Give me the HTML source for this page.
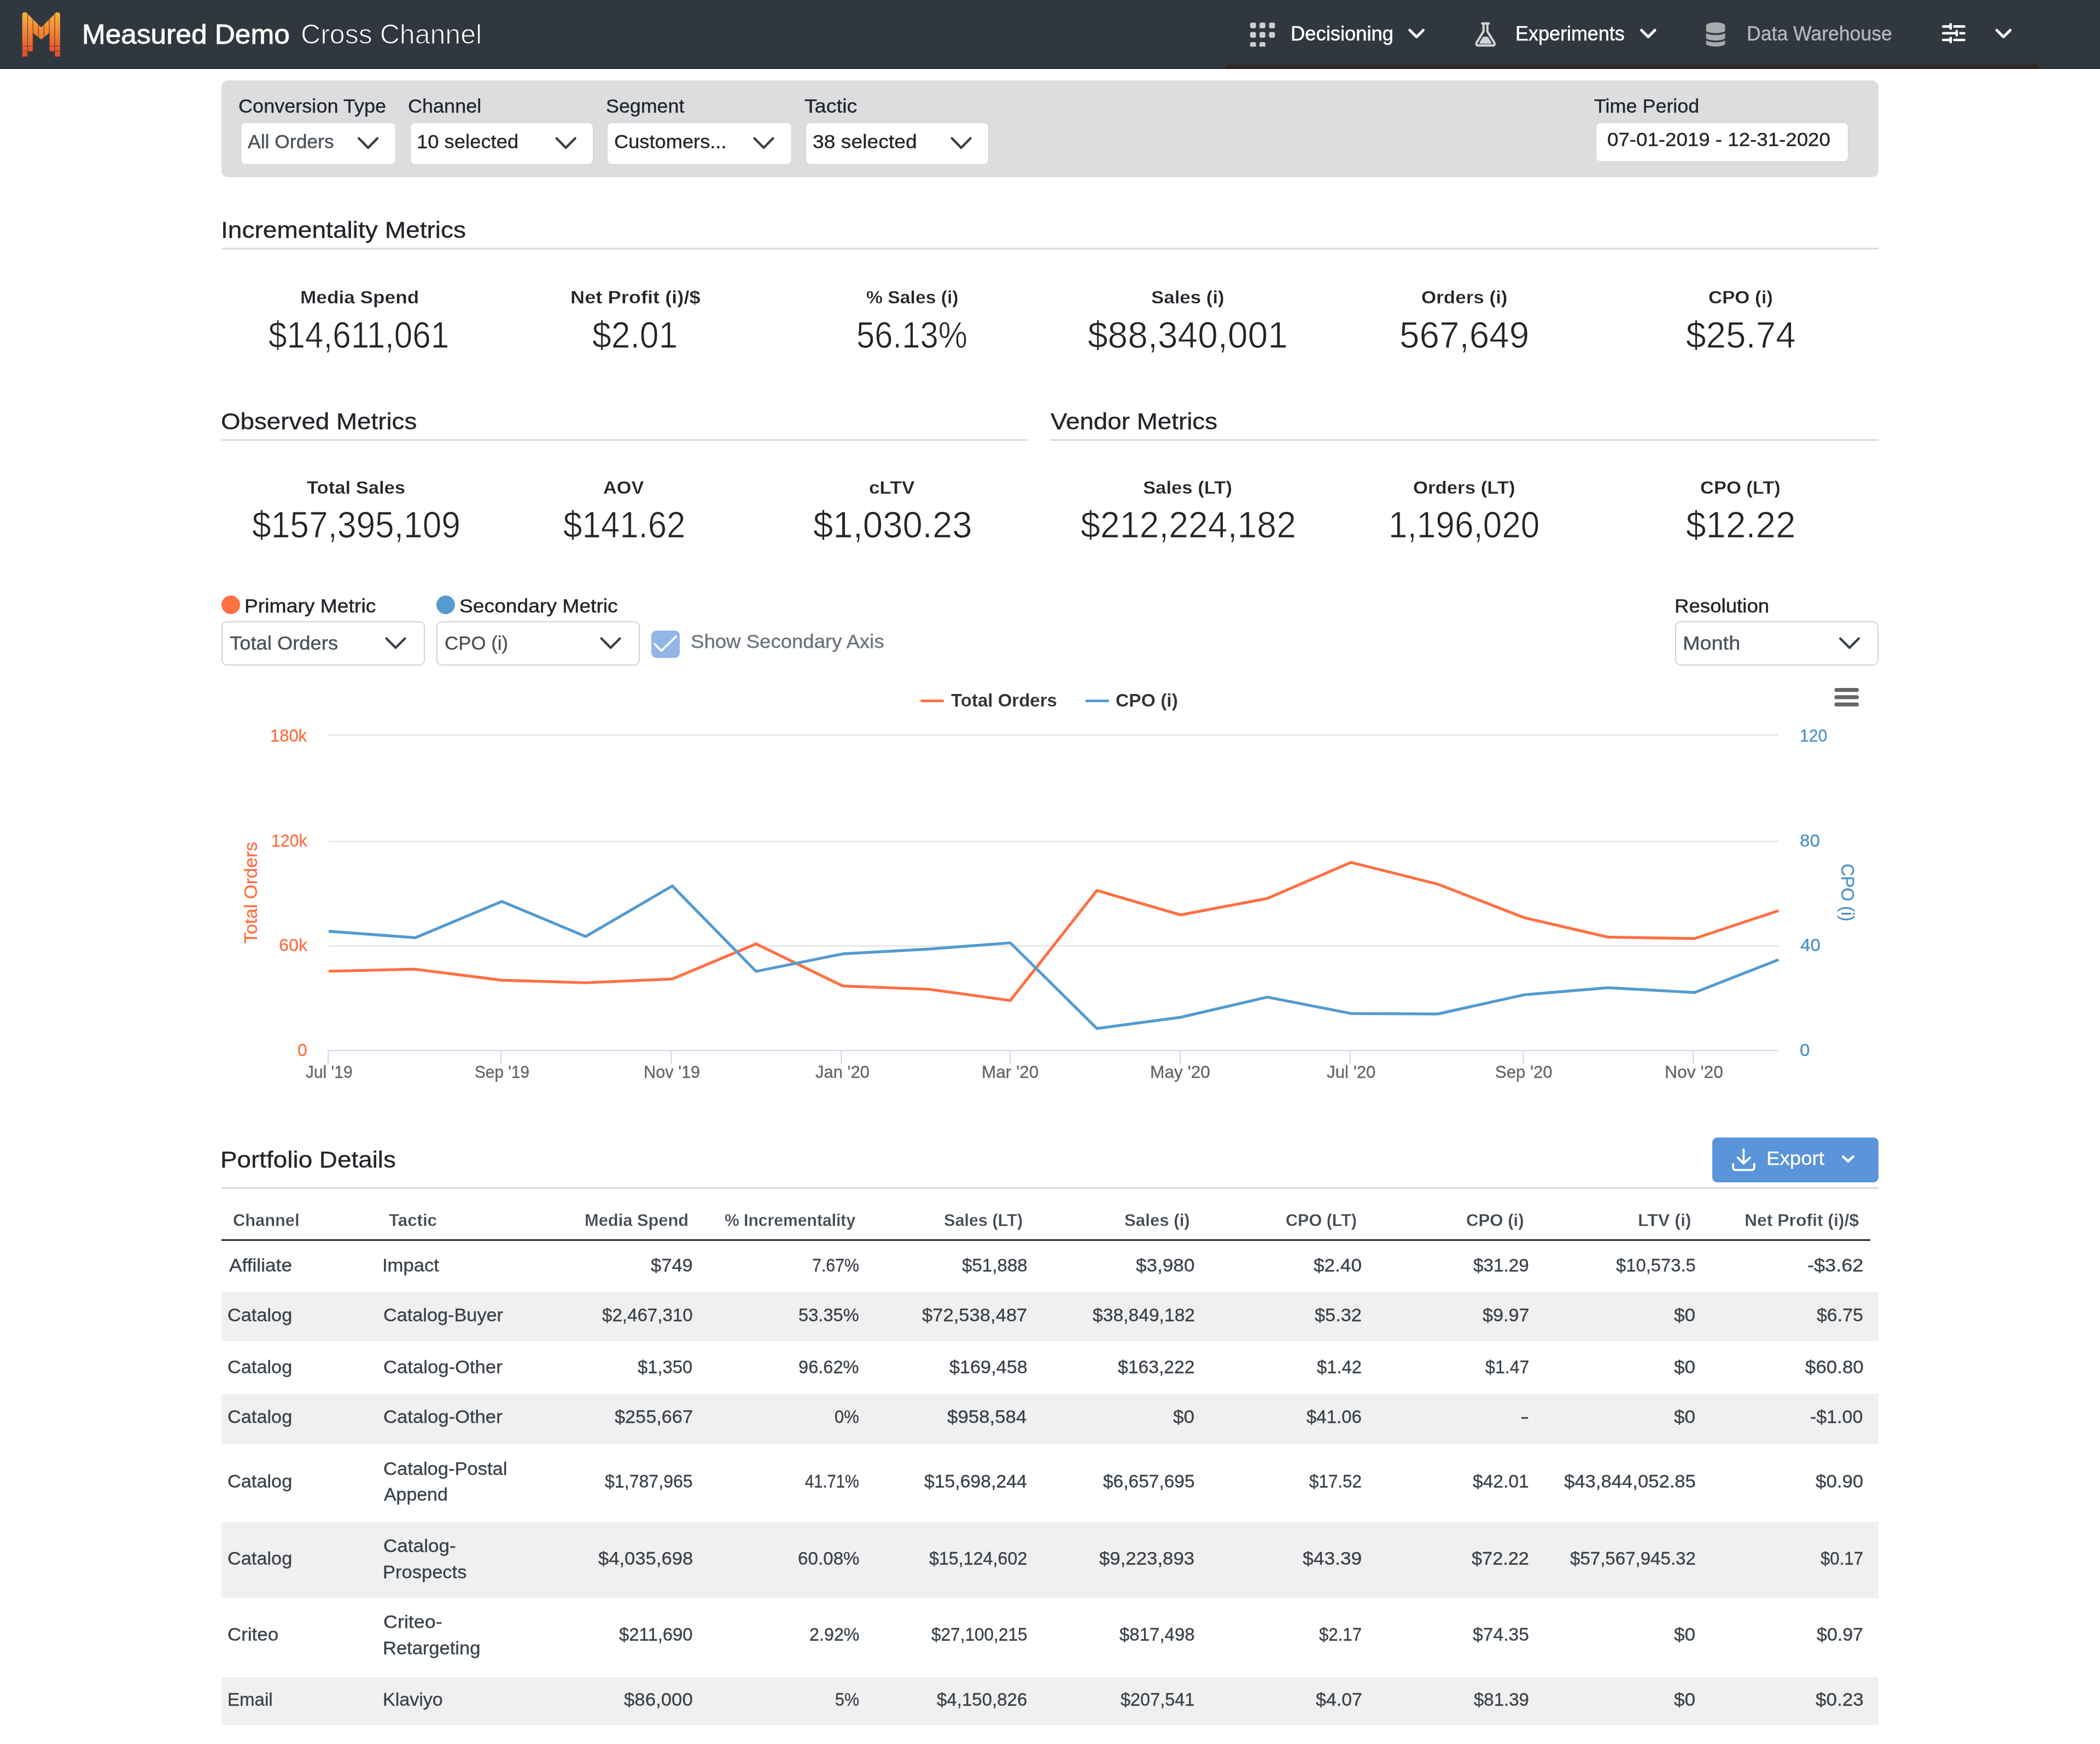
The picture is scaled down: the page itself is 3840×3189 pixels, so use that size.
<!DOCTYPE html>
<html><head><meta charset="utf-8"><title>Measured Demo - Cross Channel</title>
<style>
html,body{margin:0;padding:0;background:#fff;}
body{width:3840px;height:3189px;position:relative;overflow:hidden;font-family:"Liberation Sans",sans-serif;}
.a{position:absolute;}
.t{position:absolute;white-space:nowrap;line-height:1;transform-origin:0 50%;}
.hdr{left:0;top:0;width:3840px;height:125.5px;background:#30373f;}
.fbar{left:405px;top:147px;width:3030px;height:177px;background:#dcdddf;border-radius:12px;}
.sel{background:#fff;border:1.5px solid #cdd2d8;border-radius:9px;box-sizing:border-box;}
.sel2{background:#fff;border:2.5px solid #ced4da;border-radius:10px;box-sizing:border-box;}
.rule{height:2.8px;background:#dadbdd;}
.stripe{left:405px;width:3030px;background:#f0f0f0;}
svg{position:absolute;overflow:visible;}
</style></head><body>
<!-- header -->
<div class="a hdr"></div>
<div class="a" style="left:2242px;top:118.3px;width:1486px;height:7px;background:#2f2926"></div>
<div class="a" style="left:0;top:124.8px;width:3840px;height:1.2px;background:#050607"></div>
<!--LOGO-->
<!--NAVICONS-->
<!-- filter bar -->
<div class="a fbar"></div>
<div class="a sel" style="left:440px;top:224px;width:284px;height:77px"></div>
<div class="a sel" style="left:750px;top:224px;width:334.5px;height:77px"></div>
<div class="a sel" style="left:1110px;top:224px;width:337.5px;height:77px"></div>
<div class="a sel" style="left:1473px;top:224px;width:335px;height:77px"></div>
<div class="a sel" style="left:2918px;top:224px;width:461.5px;height:71.5px"></div>
<!-- section rules -->
<div class="a rule" style="left:405px;top:453.2px;width:3030px"></div>
<div class="a rule" style="left:405px;top:803px;width:1474px"></div>
<div class="a rule" style="left:1920px;top:803px;width:1515px"></div>
<div class="a rule" style="left:405px;top:2171.3px;width:3030px"></div>
<!-- chart controls -->
<div class="a" style="left:404.5px;top:1089px;width:34px;height:34px;border-radius:50%;background:#ff7043"></div>
<div class="a" style="left:797.5px;top:1089px;width:34px;height:34px;border-radius:50%;background:#549bd0"></div>
<div class="a sel2" style="left:405px;top:1135.5px;width:372px;height:81.5px"></div>
<div class="a sel2" style="left:797.5px;top:1135.5px;width:372px;height:81.5px"></div>
<div class="a sel2" style="left:3063px;top:1135.5px;width:372px;height:81.5px"></div>
<div class="a" style="left:1190.5px;top:1153px;width:52.5px;height:50px;border-radius:9px;background:#92b6e6"></div>
<!--CHEVRONS-->
<!-- export -->
<div class="a" style="left:3131px;top:2080px;width:304px;height:82px;border-radius:9px;background:#5a94d9"></div>
<!--EXPORTICON-->
<!-- table -->
<div class="a" style="left:405px;top:2266px;width:3015.2px;height:2.8px;background:#272d35"></div>
<div class="a stripe" style="top:2363.3px;height:88.3px"></div>
<div class="a stripe" style="top:2549.3px;height:91.4px"></div>
<div class="a stripe" style="top:2783.3px;height:138.4px"></div>
<div class="a stripe" style="top:3066.7px;height:87.6px"></div>
<svg width="3840" height="3189" viewBox="0 0 3840 3189" style="left:0;top:0">
<defs><linearGradient id="lg" x1="0" y1="22" x2="0" y2="104" gradientUnits="userSpaceOnUse"><stop offset="0" stop-color="#f9b340"/><stop offset="0.45" stop-color="#ee8438"/><stop offset="1" stop-color="#df4a2f"/></linearGradient></defs>
<path fill="url(#lg)" d="M40.6,103.6 L40.6,27.2 Q40.6,22.4 45.35,22.4 Q49.6,22.4 50.6,25.6 L75.25,50 L99.9,25.6 Q100.9,22.4 105.15,22.4 Q109.9,22.4 109.9,27.2 L109.9,103.6 L100.1,103.6 L100.1,93.7 L90.3,93.7 L90.3,60.2 L75.25,72.2 L60.2,60.2 L60.2,93.7 L50.5,93.7 L50.5,103.6 Z"/>
<path stroke="#5b2a1c" stroke-opacity="0.85" stroke-width="1.1" fill="none" d="M50.5,24.5V103.6 M60.4,35V93.7 M70.4,45V68.4 M80.4,45V68 M90.1,35V93.7 M100,24.5V103.6 M40.6,84.2H60.4 M90.1,84.2H109.9 M40.6,93.7H50.5 M100,93.7H109.9"/>
<rect x="2285.9" y="41.3" width="10.7" height="10.5" rx="3" fill="#cfcfcf"/>
<rect x="2303.1" y="41.3" width="10.7" height="10.5" rx="3" fill="#cfcfcf"/>
<rect x="2320.6" y="41.3" width="10.7" height="10.5" rx="3" fill="#cfcfcf"/>
<rect x="2285.9" y="58.5" width="10.7" height="10.5" rx="3" fill="#cfcfcf"/>
<rect x="2303.1" y="58.5" width="10.7" height="10.5" rx="3" fill="#cfcfcf"/>
<rect x="2320.6" y="58.5" width="10.7" height="10.5" rx="3" fill="#cfcfcf"/>
<path fill="#cfcfcf" d="M2285.9,85.3 v-5.3 q0,-3 3,-3 h4.7 q3,0 3,3 v5.3 z"/>
<path fill="#cfcfcf" d="M2303.1,85.3 v-5.3 q0,-3 3,-3 h4.7 q3,0 3,3 v5.3 z"/>
<polyline points="2577.9,55.2 2590.2,67.4 2602.5,55.2" fill="none" stroke="#fff" stroke-width="5" stroke-linecap="round" stroke-linejoin="round"/>
<polyline points="3001.5,55.2 3013.8,67.4 3026.1,55.2" fill="none" stroke="#fff" stroke-width="5" stroke-linecap="round" stroke-linejoin="round"/>
<polyline points="3651.2,55.2 3663.5,67.4 3675.8,55.2" fill="none" stroke="#fff" stroke-width="5" stroke-linecap="round" stroke-linejoin="round"/>
<path fill="none" stroke="#d2d2d2" stroke-width="4.2" stroke-linecap="round" stroke-linejoin="round" d="M2710.2,42.9 H2722.3 M2712.7,44 V57.6 L2700.4,77.4 Q2697.6,83.2 2703.6,83.2 H2728.9 Q2734.9,83.2 2732.1,77.4 L2719.8,57.6 V44"/>
<path fill="#d2d2d2" d="M2705.7,77.4 L2710.7,69 Q2711.9,67 2714.1,67 H2718.4 Q2720.6,67 2721.8,69 L2726.8,77.4 Q2727.9,79.9 2725.4,79.9 H2707.1 Q2704.6,79.9 2705.7,77.4 Z"/>
<path fill="#a9aaac" d="M3119.7,47 A17.4,6.2 0 0 1 3154.5,47 V79.5 A17.4,5.8 0 0 1 3119.7,79.5 Z"/>
<path fill="none" stroke="#30373f" stroke-width="3.2" d="M3119.2,57.2 A17.9,5.2 0 0 0 3155,57.2 M3119.2,70.6 A17.9,5.2 0 0 0 3155,70.6"/>
<path stroke="#fff" stroke-width="4.6" stroke-linecap="round" fill="none" d="M3553.2,48.4H3566.9 M3566.9,44.4V52.2 M3573.6,48.4H3591.7 M3553.2,60.7H3578 M3578,56.8V64.5 M3584.7,60.7H3591.7 M3553.2,73H3566.9 M3566.9,69.2V77 M3573.6,73H3591.7"/>
<polyline points="656.2,252.9 673.1,270.3 690.0,252.9" fill="none" stroke="#3a4047" stroke-width="4.3" stroke-linecap="round" stroke-linejoin="round"/>
<polyline points="1017.8,252.9 1034.7,270.3 1051.6,252.9" fill="none" stroke="#3a4047" stroke-width="4.3" stroke-linecap="round" stroke-linejoin="round"/>
<polyline points="1379.6,252.9 1396.5,270.3 1413.4,252.9" fill="none" stroke="#3a4047" stroke-width="4.3" stroke-linecap="round" stroke-linejoin="round"/>
<polyline points="1740.7,252.9 1757.6,270.3 1774.5,252.9" fill="none" stroke="#3a4047" stroke-width="4.3" stroke-linecap="round" stroke-linejoin="round"/>
<polyline points="706.6,1167.5 723.5,1184.5 740.4,1167.5" fill="none" stroke="#3a4047" stroke-width="4.3" stroke-linecap="round" stroke-linejoin="round"/>
<polyline points="1099.7,1167.5 1116.6,1184.5 1133.5,1167.5" fill="none" stroke="#3a4047" stroke-width="4.3" stroke-linecap="round" stroke-linejoin="round"/>
<polyline points="3365.1,1167.5 3382.0,1184.5 3398.9,1167.5" fill="none" stroke="#3a4047" stroke-width="4.3" stroke-linecap="round" stroke-linejoin="round"/>
<polyline points="1196.7,1177.3 1209.3,1189.9 1236.3,1163.6" fill="none" stroke="#fff" stroke-width="3.6" stroke-linecap="round" stroke-linejoin="round"/>
<path stroke="#666" stroke-width="7.3" stroke-linecap="round" d="M3358,1261.6H3395.3 M3358,1274.9H3395.3 M3358,1288.2H3395.3"/>
<path fill="none" stroke="#fff" stroke-width="3.8" stroke-linecap="round" stroke-linejoin="round" d="M3188.3,2101.8V2127 M3177.5,2116.7L3188.3,2127.5L3199.8,2116.7 M3169.1,2128.5V2134.5Q3169.1,2139.4 3174,2139.4H3203Q3207.8,2139.4 3207.8,2134.5V2128.5"/>
<polyline points="3370.2,2114.8 3379.4,2123.7 3388.6,2114.8" fill="none" stroke="#fff" stroke-width="4.5" stroke-linecap="round" stroke-linejoin="round"/>
<path stroke="#e5e5e5" stroke-width="2.4" d="M601,1344.3H3252 M601,1538.4H3252 M601,1729.7H3252"/>
<path stroke="#ccd6eb" stroke-width="2" d="M599,1921H3252"/>
<path stroke="#ccd6eb" stroke-width="2" d="M600.1,1921V1946 M916.2,1921V1946 M1227.4,1921V1946 M1538.3,1921V1946 M1846.9,1921V1946 M2158.1,1921V1946 M2468.6,1921V1946 M2785.4,1921V1946 M3096.3,1921V1946"/>
<polyline fill="none" stroke="#ff7043" stroke-width="5.2" stroke-linejoin="round" points="601.0,1776.0 759.3,1772.2 917.7,1792.4 1070.9,1797.0 1229.3,1790.2 1382.5,1725.9 1540.9,1802.9 1699.2,1809.0 1847.4,1829.5 2005.7,1628.3 2158.9,1672.9 2317.3,1642.9 2470.5,1576.9 2628.9,1616.7 2787.2,1678.0 2940.5,1713.6 3098.8,1716.1 3252.1,1665.3"/>
<polyline fill="none" stroke="#549bd0" stroke-width="5.2" stroke-linejoin="round" points="601.0,1702.9 759.3,1714.7 917.7,1648.4 1070.9,1712.4 1229.3,1619.9 1382.5,1776.2 1540.9,1744.2 1699.2,1735.4 1847.4,1724.0 2005.7,1880.7 2158.9,1860.1 2317.3,1823.3 2470.5,1853.3 2628.9,1854.1 2787.2,1819.0 2940.5,1806.1 3098.8,1814.8 3252.1,1754.9"/>
<path stroke="#ff7043" stroke-width="4.6" d="M1683.4,1281.6H1725.7"/>
<path stroke="#549bd0" stroke-width="4.6" d="M1985,1281.6H2027.7"/>
<text x="0.0" y="0.0" font-family="Liberation Sans, sans-serif" font-size="33.82" fill="#ff7043" stroke="#ff7043" stroke-width="0.35" text-anchor="middle" textLength="186.0" lengthAdjust="spacingAndGlyphs" transform="translate(469.8,1632.5) rotate(-90)">Total Orders</text>
<text x="0.0" y="0.0" font-family="Liberation Sans, sans-serif" font-size="33.82" fill="#4c92c8" stroke="#4c92c8" stroke-width="0.35" text-anchor="middle" textLength="105.5" lengthAdjust="spacingAndGlyphs" transform="translate(3366.9,1632) rotate(90)">CPO (i)</text>
</svg>
<div id="txt" style="position:absolute;left:0;top:0;width:3840px;height:3189px;will-change:transform">
<span class="t" style="left:149.62px;top:37.7px;font-size:50.74px;color:#fff;transform:scaleX(1.0126);-webkit-text-stroke:0.9px #fff">Measured Demo</span>
<span class="t" style="left:550.18px;top:37.7px;font-size:50.74px;color:#fff;transform:scaleX(0.9868);-webkit-text-stroke:1.2px #30373f">Cross Channel</span>
<span class="t" style="left:2359.81px;top:44.1px;font-size:36.15px;color:#fff;transform:scaleX(1.0063);-webkit-text-stroke:0.5px #fff">Decisioning</span>
<span class="t" style="left:2770.84px;top:44.1px;font-size:36.15px;color:#fff;transform:scaleX(0.9948);-webkit-text-stroke:0.5px #fff">Experiments</span>
<span class="t" style="left:3194.47px;top:44.1px;font-size:36.15px;color:#b3b8bd;transform:scaleX(0.9850);-webkit-text-stroke:0.4px #b3b8bd">Data Warehouse</span>
<span class="t" style="left:436.04px;top:176.5px;font-size:34.88px;color:#212529;transform:scaleX(1.0347);-webkit-text-stroke:0.35px #212529">Conversion Type</span>
<span class="t" style="left:746.23px;top:176.5px;font-size:34.88px;color:#212529;transform:scaleX(1.0335);-webkit-text-stroke:0.35px #212529">Channel</span>
<span class="t" style="left:1107.87px;top:176.5px;font-size:34.88px;color:#212529;transform:scaleX(1.0268);-webkit-text-stroke:0.35px #212529">Segment</span>
<span class="t" style="left:1470.69px;top:176.5px;font-size:34.88px;color:#212529;transform:scaleX(1.0822);-webkit-text-stroke:0.35px #212529">Tactic</span>
<span class="t" style="left:2914.91px;top:176.5px;font-size:34.88px;color:#212529;transform:scaleX(1.0300);-webkit-text-stroke:0.35px #212529">Time Period</span>
<span class="t" style="left:452.99px;top:241.7px;font-size:34.88px;color:#495057;transform:scaleX(1.0166);-webkit-text-stroke:0.35px #495057">All Orders</span>
<span class="t" style="left:761.84px;top:241.7px;font-size:34.88px;color:#212529;transform:scaleX(1.0439);-webkit-text-stroke:0.35px #212529">10 selected</span>
<span class="t" style="left:1123.41px;top:241.7px;font-size:34.88px;color:#212529;transform:scaleX(1.0397);-webkit-text-stroke:0.35px #212529">Customers...</span>
<span class="t" style="left:1486.47px;top:241.7px;font-size:34.88px;color:#212529;transform:scaleX(1.0693);-webkit-text-stroke:0.35px #212529">38 selected</span>
<span class="t" style="left:2938.92px;top:238.2px;font-size:34.88px;color:#212529;transform:scaleX(1.0518);-webkit-text-stroke:0.35px #212529">07-01-2019 - 12-31-2020</span>
<span class="t" style="left:403.65px;top:398.5px;font-size:43.13px;color:#212529;transform:scaleX(1.0685);-webkit-text-stroke:0.35px #212529">Incrementality Metrics</span>
<span class="t" style="left:404.16px;top:748.8px;font-size:43.13px;color:#212529;transform:scaleX(1.0604);-webkit-text-stroke:0.35px #212529">Observed Metrics</span>
<span class="t" style="left:1920.74px;top:748.8px;font-size:43.13px;color:#212529;transform:scaleX(1.0606);-webkit-text-stroke:0.35px #212529">Vendor Metrics</span>
<span class="t" style="left:402.75px;top:2099.4px;font-size:43.13px;color:#212529;transform:scaleX(1.0628);-webkit-text-stroke:0.35px #212529">Portfolio Details</span>
<span class="t" style="left:548.66px;top:527.3px;font-size:33.82px;color:#212529;transform:scaleX(1.0417);font-weight:700;-webkit-text-stroke:0.3px #fff">Media Spend</span>
<span class="t" style="left:490.94px;top:578.9px;font-size:67.65px;color:#212529;transform:scaleX(0.8899);-webkit-text-stroke:0.9px #fff">$14,611,061</span>
<span class="t" style="left:1042.72px;top:527.3px;font-size:33.82px;color:#212529;transform:scaleX(1.0720);font-weight:700;-webkit-text-stroke:0.3px #fff">Net Profit (i)/$</span>
<span class="t" style="left:1083.38px;top:578.9px;font-size:67.65px;color:#212529;transform:scaleX(0.9230);-webkit-text-stroke:0.9px #fff">$2.01</span>
<span class="t" style="left:1583.57px;top:527.3px;font-size:33.82px;color:#212529;transform:scaleX(0.9967);font-weight:700;-webkit-text-stroke:0.3px #fff">% Sales (i)</span>
<span class="t" style="left:1565.71px;top:578.9px;font-size:67.65px;color:#212529;transform:scaleX(0.8850);-webkit-text-stroke:0.9px #fff">56.13%</span>
<span class="t" style="left:2105.10px;top:527.3px;font-size:33.82px;color:#212529;transform:scaleX(1.0313);font-weight:700;-webkit-text-stroke:0.3px #fff">Sales (i)</span>
<span class="t" style="left:1988.98px;top:578.9px;font-size:67.65px;color:#212529;transform:scaleX(0.9725);-webkit-text-stroke:0.9px #fff">$88,340,001</span>
<span class="t" style="left:2598.63px;top:527.3px;font-size:33.82px;color:#212529;transform:scaleX(1.0350);font-weight:700;-webkit-text-stroke:0.3px #fff">Orders (i)</span>
<span class="t" style="left:2559.33px;top:578.9px;font-size:67.65px;color:#212529;transform:scaleX(0.9708);-webkit-text-stroke:0.9px #fff">567,649</span>
<span class="t" style="left:3123.63px;top:527.3px;font-size:33.82px;color:#212529;transform:scaleX(1.0294);font-weight:700;-webkit-text-stroke:0.3px #fff">CPO (i)</span>
<span class="t" style="left:3083.17px;top:578.9px;font-size:67.65px;color:#212529;transform:scaleX(0.9700);-webkit-text-stroke:0.9px #fff">$25.74</span>
<span class="t" style="left:560.94px;top:874.5px;font-size:33.82px;color:#212529;transform:scaleX(1.0227);font-weight:700;-webkit-text-stroke:0.3px #fff">Total Sales</span>
<span class="t" style="left:460.57px;top:925.9px;font-size:67.65px;color:#212529;transform:scaleX(0.9206);-webkit-text-stroke:0.9px #fff">$157,395,109</span>
<span class="t" style="left:1103.20px;top:874.5px;font-size:33.82px;color:#212529;transform:scaleX(1.0134);font-weight:700;-webkit-text-stroke:0.3px #fff">AOV</span>
<span class="t" style="left:1030.41px;top:925.9px;font-size:67.65px;color:#212529;transform:scaleX(0.9138);-webkit-text-stroke:0.9px #fff">$141.62</span>
<span class="t" style="left:1589.42px;top:874.5px;font-size:33.82px;color:#212529;transform:scaleX(1.0414);font-weight:700;-webkit-text-stroke:0.3px #fff">cLTV</span>
<span class="t" style="left:1486.98px;top:925.9px;font-size:67.65px;color:#212529;transform:scaleX(0.9658);-webkit-text-stroke:0.9px #fff">$1,030.23</span>
<span class="t" style="left:2090.15px;top:874.5px;font-size:33.82px;color:#212529;transform:scaleX(1.0247);font-weight:700;-webkit-text-stroke:0.3px #fff">Sales (LT)</span>
<span class="t" style="left:1975.58px;top:925.9px;font-size:67.65px;color:#212529;transform:scaleX(0.9522);-webkit-text-stroke:0.9px #fff">$212,224,182</span>
<span class="t" style="left:2583.84px;top:874.5px;font-size:33.82px;color:#212529;transform:scaleX(1.0279);font-weight:700;-webkit-text-stroke:0.3px #fff">Orders (LT)</span>
<span class="t" style="left:2539.02px;top:925.9px;font-size:67.65px;color:#212529;transform:scaleX(0.9183);-webkit-text-stroke:0.9px #fff">1,196,020</span>
<span class="t" style="left:3108.86px;top:874.5px;font-size:33.82px;color:#212529;transform:scaleX(1.0199);font-weight:700;-webkit-text-stroke:0.3px #fff">CPO (LT)</span>
<span class="t" style="left:3082.77px;top:925.9px;font-size:67.65px;color:#212529;transform:scaleX(0.9691);-webkit-text-stroke:0.9px #fff">$12.22</span>
<span class="t" style="left:446.67px;top:1090.1px;font-size:35.94px;color:#212529;transform:scaleX(1.0381);-webkit-text-stroke:0.5px #212529">Primary Metric</span>
<span class="t" style="left:839.68px;top:1090.1px;font-size:35.94px;color:#212529;transform:scaleX(1.0366);-webkit-text-stroke:0.5px #212529">Secondary Metric</span>
<span class="t" style="left:3061.77px;top:1090.1px;font-size:35.94px;color:#212529;transform:scaleX(1.0205);-webkit-text-stroke:0.5px #212529">Resolution</span>
<span class="t" style="left:420.30px;top:1158.7px;font-size:34.88px;color:#495057;transform:scaleX(1.0429);-webkit-text-stroke:0.35px #495057">Total Orders</span>
<span class="t" style="left:813.09px;top:1158.7px;font-size:34.88px;color:#495057;transform:scaleX(0.9989);-webkit-text-stroke:0.35px #495057">CPO (i)</span>
<span class="t" style="left:3077.48px;top:1158.7px;font-size:34.88px;color:#495057;transform:scaleX(1.0852);-webkit-text-stroke:0.35px #495057">Month</span>
<span class="t" style="left:1262.65px;top:1155.6px;font-size:34.88px;color:#6c757d;transform:scaleX(1.0488);-webkit-text-stroke:0.4px #6c757d">Show Secondary Axis</span>
<span class="t" style="left:3229.87px;top:2100.5px;font-size:35.41px;color:#fff;transform:scaleX(1.0361);-webkit-text-stroke:0.35px #fff">Export</span>
<span class="t" style="left:425.71px;top:2215.7px;font-size:31.29px;color:#434a54;transform:scaleX(0.9852);font-weight:700;-webkit-text-stroke:0.3px #fff">Channel</span>
<span class="t" style="left:710.72px;top:2215.7px;font-size:31.29px;color:#434a54;transform:scaleX(0.9991);font-weight:700;-webkit-text-stroke:0.3px #fff">Tactic</span>
<span class="t" style="left:1068.59px;top:2215.7px;font-size:31.29px;color:#434a54;transform:scaleX(0.9857);font-weight:700;-webkit-text-stroke:0.3px #fff">Media Spend</span>
<span class="t" style="left:1324.75px;top:2215.7px;font-size:31.29px;color:#434a54;transform:scaleX(0.9619);font-weight:700;-webkit-text-stroke:0.3px #fff">% Incrementality</span>
<span class="t" style="left:1725.63px;top:2215.7px;font-size:31.29px;color:#434a54;transform:scaleX(0.9792);font-weight:700;-webkit-text-stroke:0.3px #fff">Sales (LT)</span>
<span class="t" style="left:2056.14px;top:2215.7px;font-size:31.29px;color:#434a54;transform:scaleX(0.9984);font-weight:700;-webkit-text-stroke:0.3px #fff">Sales (i)</span>
<span class="t" style="left:2351.12px;top:2215.7px;font-size:31.29px;color:#434a54;transform:scaleX(0.9761);font-weight:700;-webkit-text-stroke:0.3px #fff">CPO (LT)</span>
<span class="t" style="left:2681.35px;top:2215.7px;font-size:31.29px;color:#434a54;transform:scaleX(0.9965);font-weight:700;-webkit-text-stroke:0.3px #fff">CPO (i)</span>
<span class="t" style="left:2995.30px;top:2215.7px;font-size:31.29px;color:#434a54;transform:scaleX(1.0271);font-weight:700;-webkit-text-stroke:0.3px #fff">LTV (i)</span>
<span class="t" style="left:3189.72px;top:2215.7px;font-size:31.29px;color:#434a54;transform:scaleX(1.0194);font-weight:700;-webkit-text-stroke:0.3px #fff">Net Profit (i)/$</span>
<span class="t" style="left:418.59px;top:2296.6px;font-size:33.82px;color:#3a4149;transform:scaleX(1.0432);-webkit-text-stroke:0.35px #3a4149">Affiliate</span>
<span class="t" style="left:699.24px;top:2296.6px;font-size:33.82px;color:#3a4149;transform:scaleX(1.0244);-webkit-text-stroke:0.35px #3a4149">Impact</span>
<span class="t" style="left:1190.42px;top:2296.6px;font-size:33.82px;color:#3a4149;transform:scaleX(1.0204);-webkit-text-stroke:0.35px #3a4149">$749</span>
<span class="t" style="left:1485.09px;top:2296.6px;font-size:33.82px;color:#3a4149;transform:scaleX(0.8976);-webkit-text-stroke:0.35px #3a4149">7.67%</span>
<span class="t" style="left:1759.05px;top:2296.6px;font-size:33.82px;color:#3a4149;transform:scaleX(0.9795);-webkit-text-stroke:0.35px #3a4149">$51,888</span>
<span class="t" style="left:2076.82px;top:2296.6px;font-size:33.82px;color:#3a4149;transform:scaleX(1.0389);-webkit-text-stroke:0.35px #3a4149">$3,980</span>
<span class="t" style="left:2401.82px;top:2296.6px;font-size:33.82px;color:#3a4149;transform:scaleX(1.0393);-webkit-text-stroke:0.35px #3a4149">$2.40</span>
<span class="t" style="left:2694.26px;top:2296.6px;font-size:33.82px;color:#3a4149;transform:scaleX(0.9832);-webkit-text-stroke:0.35px #3a4149">$31.29</span>
<span class="t" style="left:2955.06px;top:2296.6px;font-size:33.82px;color:#3a4149;transform:scaleX(0.9690);-webkit-text-stroke:0.35px #3a4149">$10,573.5</span>
<span class="t" style="left:3305.28px;top:2296.6px;font-size:33.82px;color:#3a4149;transform:scaleX(1.0669);-webkit-text-stroke:0.35px #3a4149">-$3.62</span>
<span class="t" style="left:416.10px;top:2388.3px;font-size:33.82px;color:#3a4149;transform:scaleX(1.0150);-webkit-text-stroke:0.35px #3a4149">Catalog</span>
<span class="t" style="left:700.70px;top:2388.3px;font-size:33.82px;color:#3a4149;transform:scaleX(1.0133);-webkit-text-stroke:0.35px #3a4149">Catalog-Buyer</span>
<span class="t" style="left:1101.05px;top:2388.3px;font-size:33.82px;color:#3a4149;transform:scaleX(0.9784);-webkit-text-stroke:0.35px #3a4149">$2,467,310</span>
<span class="t" style="left:1460.21px;top:2388.3px;font-size:33.82px;color:#3a4149;transform:scaleX(0.9654);-webkit-text-stroke:0.35px #3a4149">53.35%</span>
<span class="t" style="left:1686.42px;top:2388.3px;font-size:33.82px;color:#3a4149;transform:scaleX(1.0230);-webkit-text-stroke:0.35px #3a4149">$72,538,487</span>
<span class="t" style="left:1997.64px;top:2388.3px;font-size:33.82px;color:#3a4149;transform:scaleX(0.9948);-webkit-text-stroke:0.35px #3a4149">$38,849,182</span>
<span class="t" style="left:2404.22px;top:2388.3px;font-size:33.82px;color:#3a4149;transform:scaleX(1.0161);-webkit-text-stroke:0.35px #3a4149">$5.32</span>
<span class="t" style="left:2710.82px;top:2388.3px;font-size:33.82px;color:#3a4149;transform:scaleX(1.0108);-webkit-text-stroke:0.35px #3a4149">$9.97</span>
<span class="t" style="left:3061.21px;top:2388.3px;font-size:33.82px;color:#3a4149;transform:scaleX(1.0423);-webkit-text-stroke:0.35px #3a4149">$0</span>
<span class="t" style="left:3322.25px;top:2388.3px;font-size:33.82px;color:#3a4149;transform:scaleX(1.0018);-webkit-text-stroke:0.35px #3a4149">$6.75</span>
<span class="t" style="left:416.10px;top:2482.6px;font-size:33.82px;color:#3a4149;transform:scaleX(1.0150);-webkit-text-stroke:0.35px #3a4149">Catalog</span>
<span class="t" style="left:700.68px;top:2482.6px;font-size:33.82px;color:#3a4149;transform:scaleX(1.0250);-webkit-text-stroke:0.35px #3a4149">Catalog-Other</span>
<span class="t" style="left:1166.26px;top:2482.6px;font-size:33.82px;color:#3a4149;transform:scaleX(0.9702);-webkit-text-stroke:0.35px #3a4149">$1,350</span>
<span class="t" style="left:1460.37px;top:2482.6px;font-size:33.82px;color:#3a4149;transform:scaleX(0.9643);-webkit-text-stroke:0.35px #3a4149">96.62%</span>
<span class="t" style="left:1735.83px;top:2482.6px;font-size:33.82px;color:#3a4149;transform:scaleX(1.0122);-webkit-text-stroke:0.35px #3a4149">$169,458</span>
<span class="t" style="left:2044.24px;top:2482.6px;font-size:33.82px;color:#3a4149;transform:scaleX(0.9967);-webkit-text-stroke:0.35px #3a4149">$163,222</span>
<span class="t" style="left:2408.45px;top:2482.6px;font-size:33.82px;color:#3a4149;transform:scaleX(0.9693);-webkit-text-stroke:0.35px #3a4149">$1.42</span>
<span class="t" style="left:2715.85px;top:2482.6px;font-size:33.82px;color:#3a4149;transform:scaleX(0.9511);-webkit-text-stroke:0.35px #3a4149">$1.47</span>
<span class="t" style="left:3061.21px;top:2482.6px;font-size:33.82px;color:#3a4149;transform:scaleX(1.0423);-webkit-text-stroke:0.35px #3a4149">$0</span>
<span class="t" style="left:3300.82px;top:2482.6px;font-size:33.82px;color:#3a4149;transform:scaleX(1.0320);-webkit-text-stroke:0.35px #3a4149">$60.80</span>
<span class="t" style="left:416.10px;top:2574.3px;font-size:33.82px;color:#3a4149;transform:scaleX(1.0150);-webkit-text-stroke:0.35px #3a4149">Catalog</span>
<span class="t" style="left:700.68px;top:2574.3px;font-size:33.82px;color:#3a4149;transform:scaleX(1.0250);-webkit-text-stroke:0.35px #3a4149">Catalog-Other</span>
<span class="t" style="left:1123.63px;top:2574.3px;font-size:33.82px;color:#3a4149;transform:scaleX(1.0136);-webkit-text-stroke:0.35px #3a4149">$255,667</span>
<span class="t" style="left:1526.03px;top:2574.3px;font-size:33.82px;color:#3a4149;transform:scaleX(0.9205);-webkit-text-stroke:0.35px #3a4149">0%</span>
<span class="t" style="left:1732.42px;top:2574.3px;font-size:33.82px;color:#3a4149;transform:scaleX(1.0309);-webkit-text-stroke:0.35px #3a4149">$958,584</span>
<span class="t" style="left:2144.63px;top:2574.3px;font-size:33.82px;color:#3a4149;transform:scaleX(1.0423);-webkit-text-stroke:0.35px #3a4149">$0</span>
<span class="t" style="left:2389.26px;top:2574.3px;font-size:33.82px;color:#3a4149;transform:scaleX(0.9759);-webkit-text-stroke:0.35px #3a4149">$41.06</span>
<span class="t" style="left:2780.42px;top:2574.3px;font-size:33.82px;color:#3a4149;transform:scaleX(1.4314);-webkit-text-stroke:0.35px #3a4149">-</span>
<span class="t" style="left:3061.21px;top:2574.3px;font-size:33.82px;color:#3a4149;transform:scaleX(1.0423);-webkit-text-stroke:0.35px #3a4149">$0</span>
<span class="t" style="left:3310.36px;top:2574.3px;font-size:33.82px;color:#3a4149;transform:scaleX(1.0052);-webkit-text-stroke:0.35px #3a4149">-$1.00</span>
<span class="t" style="left:416.10px;top:2691.6px;font-size:33.82px;color:#3a4149;transform:scaleX(1.0150);-webkit-text-stroke:0.35px #3a4149">Catalog</span>
<span class="t" style="left:700.69px;top:2668.9px;font-size:33.82px;color:#3a4149;transform:scaleX(1.0211);-webkit-text-stroke:0.35px #3a4149">Catalog-Postal</span>
<span class="t" style="left:702.20px;top:2715.9px;font-size:33.82px;color:#3a4149;transform:scaleX(1.0018);-webkit-text-stroke:0.35px #3a4149">Append</span>
<span class="t" style="left:1106.06px;top:2691.6px;font-size:33.82px;color:#3a4149;transform:scaleX(0.9496);-webkit-text-stroke:0.35px #3a4149">$1,787,965</span>
<span class="t" style="left:1472.16px;top:2691.6px;font-size:33.82px;color:#3a4149;transform:scaleX(0.8616);-webkit-text-stroke:0.35px #3a4149">41.71%</span>
<span class="t" style="left:1690.03px;top:2691.6px;font-size:33.82px;color:#3a4149;transform:scaleX(0.9986);-webkit-text-stroke:0.35px #3a4149">$15,698,244</span>
<span class="t" style="left:2016.86px;top:2691.6px;font-size:33.82px;color:#3a4149;transform:scaleX(0.9904);-webkit-text-stroke:0.35px #3a4149">$6,657,695</span>
<span class="t" style="left:2394.25px;top:2691.6px;font-size:33.82px;color:#3a4149;transform:scaleX(0.9277);-webkit-text-stroke:0.35px #3a4149">$17.52</span>
<span class="t" style="left:2693.43px;top:2691.6px;font-size:33.82px;color:#3a4149;transform:scaleX(0.9935);-webkit-text-stroke:0.35px #3a4149">$42.01</span>
<span class="t" style="left:2860.02px;top:2691.6px;font-size:33.82px;color:#3a4149;transform:scaleX(1.0248);-webkit-text-stroke:0.35px #3a4149">$43,844,052.85</span>
<span class="t" style="left:3320.02px;top:2691.6px;font-size:33.82px;color:#3a4149;transform:scaleX(1.0309);-webkit-text-stroke:0.35px #3a4149">$0.90</span>
<span class="t" style="left:416.10px;top:2833.3px;font-size:33.82px;color:#3a4149;transform:scaleX(1.0150);-webkit-text-stroke:0.35px #3a4149">Catalog</span>
<span class="t" style="left:700.65px;top:2809.9px;font-size:33.82px;color:#3a4149;transform:scaleX(1.0381);-webkit-text-stroke:0.35px #3a4149">Catalog-</span>
<span class="t" style="left:699.66px;top:2857.6px;font-size:33.82px;color:#3a4149;transform:scaleX(1.0207);-webkit-text-stroke:0.35px #3a4149">Prospects</span>
<span class="t" style="left:1093.62px;top:2833.3px;font-size:33.82px;color:#3a4149;transform:scaleX(1.0232);-webkit-text-stroke:0.35px #3a4149">$4,035,698</span>
<span class="t" style="left:1458.55px;top:2833.3px;font-size:33.82px;color:#3a4149;transform:scaleX(0.9821);-webkit-text-stroke:0.35px #3a4149">60.08%</span>
<span class="t" style="left:1699.45px;top:2833.3px;font-size:33.82px;color:#3a4149;transform:scaleX(0.9536);-webkit-text-stroke:0.35px #3a4149">$15,124,602</span>
<span class="t" style="left:2010.22px;top:2833.3px;font-size:33.82px;color:#3a4149;transform:scaleX(1.0290);-webkit-text-stroke:0.35px #3a4149">$9,223,893</span>
<span class="t" style="left:2381.82px;top:2833.3px;font-size:33.82px;color:#3a4149;transform:scaleX(1.0473);-webkit-text-stroke:0.35px #3a4149">$43.39</span>
<span class="t" style="left:2690.63px;top:2833.3px;font-size:33.82px;color:#3a4149;transform:scaleX(1.0145);-webkit-text-stroke:0.35px #3a4149">$72.22</span>
<span class="t" style="left:2870.66px;top:2833.3px;font-size:33.82px;color:#3a4149;transform:scaleX(0.9779);-webkit-text-stroke:0.35px #3a4149">$57,567,945.32</span>
<span class="t" style="left:3329.24px;top:2833.3px;font-size:33.82px;color:#3a4149;transform:scaleX(0.9221);-webkit-text-stroke:0.35px #3a4149">$0.17</span>
<span class="t" style="left:416.07px;top:2972.3px;font-size:33.82px;color:#3a4149;transform:scaleX(1.0325);-webkit-text-stroke:0.35px #3a4149">Criteo</span>
<span class="t" style="left:700.61px;top:2948.9px;font-size:33.82px;color:#3a4149;transform:scaleX(1.0616);-webkit-text-stroke:0.35px #3a4149">Criteo-</span>
<span class="t" style="left:699.66px;top:2996.6px;font-size:33.82px;color:#3a4149;transform:scaleX(1.0203);-webkit-text-stroke:0.35px #3a4149">Retargeting</span>
<span class="t" style="left:1132.06px;top:2972.3px;font-size:33.82px;color:#3a4149;transform:scaleX(0.9718);-webkit-text-stroke:0.35px #3a4149">$211,690</span>
<span class="t" style="left:1479.65px;top:2972.3px;font-size:33.82px;color:#3a4149;transform:scaleX(0.9550);-webkit-text-stroke:0.35px #3a4149">2.92%</span>
<span class="t" style="left:1702.65px;top:2972.3px;font-size:33.82px;color:#3a4149;transform:scaleX(0.9337);-webkit-text-stroke:0.35px #3a4149">$27,100,215</span>
<span class="t" style="left:2046.86px;top:2972.3px;font-size:33.82px;color:#3a4149;transform:scaleX(0.9760);-webkit-text-stroke:0.35px #3a4149">$817,498</span>
<span class="t" style="left:2411.84px;top:2972.3px;font-size:33.82px;color:#3a4149;transform:scaleX(0.9221);-webkit-text-stroke:0.35px #3a4149">$2.17</span>
<span class="t" style="left:2692.64px;top:2972.3px;font-size:33.82px;color:#3a4149;transform:scaleX(0.9956);-webkit-text-stroke:0.35px #3a4149">$74.35</span>
<span class="t" style="left:3061.21px;top:2972.3px;font-size:33.82px;color:#3a4149;transform:scaleX(1.0423);-webkit-text-stroke:0.35px #3a4149">$0</span>
<span class="t" style="left:3322.25px;top:2972.3px;font-size:33.82px;color:#3a4149;transform:scaleX(1.0040);-webkit-text-stroke:0.35px #3a4149">$0.97</span>
<span class="t" style="left:415.72px;top:3090.9px;font-size:33.82px;color:#3a4149;transform:scaleX(0.9772);-webkit-text-stroke:0.35px #3a4149">Email</span>
<span class="t" style="left:699.69px;top:3090.9px;font-size:33.82px;color:#3a4149;transform:scaleX(1.0054);-webkit-text-stroke:0.35px #3a4149">Klaviyo</span>
<span class="t" style="left:1141.02px;top:3090.9px;font-size:33.82px;color:#3a4149;transform:scaleX(1.0293);-webkit-text-stroke:0.35px #3a4149">$86,000</span>
<span class="t" style="left:1526.68px;top:3090.9px;font-size:33.82px;color:#3a4149;transform:scaleX(0.9048);-webkit-text-stroke:0.35px #3a4149">5%</span>
<span class="t" style="left:1713.26px;top:3090.9px;font-size:33.82px;color:#3a4149;transform:scaleX(0.9771);-webkit-text-stroke:0.35px #3a4149">$4,150,826</span>
<span class="t" style="left:2049.26px;top:3090.9px;font-size:33.82px;color:#3a4149;transform:scaleX(0.9602);-webkit-text-stroke:0.35px #3a4149">$207,541</span>
<span class="t" style="left:2405.85px;top:3090.9px;font-size:33.82px;color:#3a4149;transform:scaleX(1.0040);-webkit-text-stroke:0.35px #3a4149">$4.07</span>
<span class="t" style="left:2695.06px;top:3090.9px;font-size:33.82px;color:#3a4149;transform:scaleX(0.9757);-webkit-text-stroke:0.35px #3a4149">$81.39</span>
<span class="t" style="left:3061.21px;top:3090.9px;font-size:33.82px;color:#3a4149;transform:scaleX(1.0423);-webkit-text-stroke:0.35px #3a4149">$0</span>
<span class="t" style="left:3320.02px;top:3090.9px;font-size:33.82px;color:#3a4149;transform:scaleX(1.0370);-webkit-text-stroke:0.35px #3a4149">$0.23</span>
<span class="t" style="left:1738.97px;top:1264.2px;font-size:33.82px;color:#333;transform:scaleX(0.9770);font-weight:700;-webkit-text-stroke:0.15px #fff">Total Orders</span>
<span class="t" style="left:2039.57px;top:1264.2px;font-size:33.82px;color:#333;transform:scaleX(0.9939);font-weight:700;-webkit-text-stroke:0.15px #fff">CPO (i)</span>
<span class="t" style="left:494.06px;top:1330.4px;font-size:30.44px;color:#ff7043;transform:scaleX(1.0159);-webkit-text-stroke:0.35px #ff7043">180k</span>
<span class="t" style="left:495.78px;top:1521.5px;font-size:30.44px;color:#ff7043;transform:scaleX(0.9941);-webkit-text-stroke:0.35px #ff7043">120k</span>
<span class="t" style="left:509.50px;top:1713.0px;font-size:30.44px;color:#ff7043;transform:scaleX(1.0646);-webkit-text-stroke:0.35px #ff7043">60k</span>
<span class="t" style="left:543.65px;top:1904.9px;font-size:30.44px;color:#ff7043;transform:scaleX(1.0457);-webkit-text-stroke:0.35px #ff7043">0</span>
<span class="t" style="left:3290.82px;top:1330.4px;font-size:30.44px;color:#4c92c8;transform:scaleX(0.9888);-webkit-text-stroke:0.35px #4c92c8">120</span>
<span class="t" style="left:3290.92px;top:1521.7px;font-size:30.44px;color:#4c92c8;transform:scaleX(1.0862);-webkit-text-stroke:0.35px #4c92c8">80</span>
<span class="t" style="left:3291.89px;top:1713.0px;font-size:30.44px;color:#4c92c8;transform:scaleX(1.0919);-webkit-text-stroke:0.35px #4c92c8">40</span>
<span class="t" style="left:3291.20px;top:1905.0px;font-size:30.44px;color:#4c92c8;transform:scaleX(1.0895);-webkit-text-stroke:0.35px #4c92c8">0</span>
<span class="t" style="left:559.20px;top:1944.7px;font-size:30.44px;color:#666;transform:scaleX(0.9829);-webkit-text-stroke:0.35px #666">Jul '19</span>
<span class="t" style="left:867.73px;top:1944.7px;font-size:30.44px;color:#666;transform:scaleX(0.9774);-webkit-text-stroke:0.35px #666">Sep '19</span>
<span class="t" style="left:1177.07px;top:1944.7px;font-size:30.44px;color:#666;transform:scaleX(1.0093);-webkit-text-stroke:0.35px #666">Nov '19</span>
<span class="t" style="left:1491.38px;top:1944.7px;font-size:30.44px;color:#666;transform:scaleX(1.0183);-webkit-text-stroke:0.35px #666">Jan '20</span>
<span class="t" style="left:1794.65px;top:1944.7px;font-size:30.44px;color:#666;transform:scaleX(1.0375);-webkit-text-stroke:0.35px #666">Mar '20</span>
<span class="t" style="left:2103.24px;top:1944.7px;font-size:30.44px;color:#666;transform:scaleX(1.0406);-webkit-text-stroke:0.35px #666">May '20</span>
<span class="t" style="left:2426.36px;top:1944.7px;font-size:30.44px;color:#666;transform:scaleX(1.0276);-webkit-text-stroke:0.35px #666">Jul '20</span>
<span class="t" style="left:2734.10px;top:1944.7px;font-size:30.44px;color:#666;transform:scaleX(1.0214);-webkit-text-stroke:0.35px #666">Sep '20</span>
<span class="t" style="left:3044.42px;top:1944.7px;font-size:30.44px;color:#666;transform:scaleX(1.0450);-webkit-text-stroke:0.35px #666">Nov '20</span>
</div>
</body></html>
